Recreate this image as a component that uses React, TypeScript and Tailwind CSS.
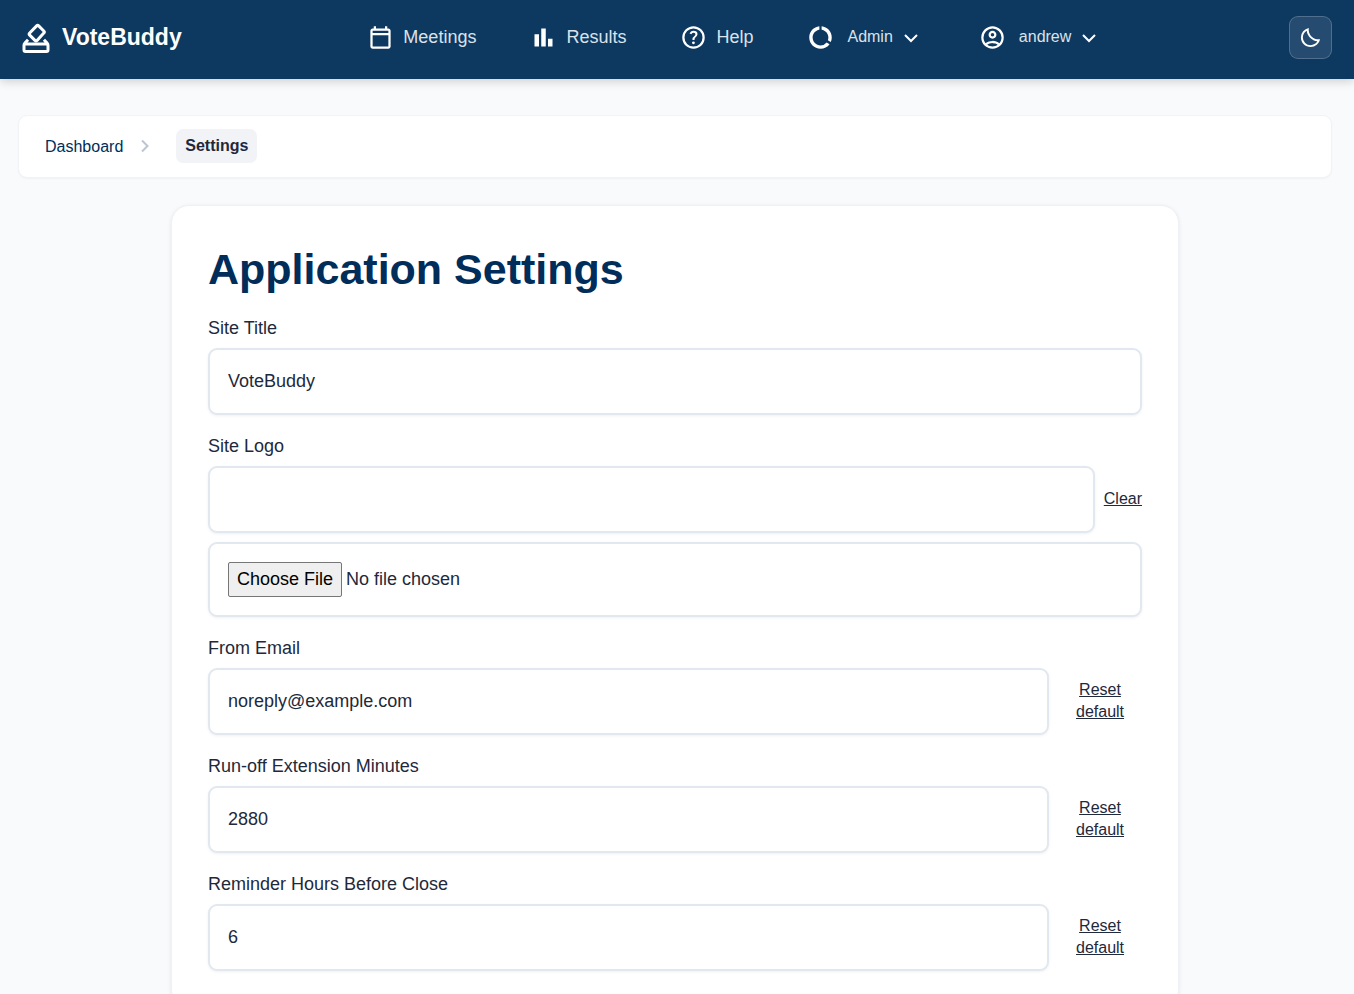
import React from "react";
import { MdBarChart, MdDataUsage } from "react-icons/md";

const navText = "text-[#dbe2ea]";

function BallotIcon() {
  return (
    <svg viewBox="0 0 24 24" className="size-9" fill="none" stroke="currentColor" strokeWidth="2" strokeLinejoin="round" aria-hidden="true">
      <path d="M6.700 13.100L4.600 15.400Q4 16 4 16.800V20a1 1 0 0 0 1 1h14a1 1 0 0 0 1-1v-3.200Q20 16 19.400 15.400L17.300 13.100M4.200 16h15.600" />
      <path d="M11.300 13.600L7.800 10.100Q7.100 9.400 7.800 8.700L12.400 3.900Q13.100 3.200 13.800 3.900L17.200 7.300Q17.900 8 17.200 8.700L12.700 13.600Q12 14.300 11.300 13.600z" />
    </svg>
  );
}

function CalendarIcon() {
  return (
    <svg viewBox="0 0 24 24" className="size-[27px]" fill="currentColor" aria-hidden="true">
      <path d="M5 22q-.825 0-1.412-.587T3 20V6q0-.825.588-1.412T5 4h1V2h2v2h8V2h2v2h1q.825 0 1.413.588T21 6v14q0 .825-.587 1.413T19 22zm0-2h14V10H5zM5 8h14V6H5z" />
    </svg>
  );
}

function HelpIcon() {
  return (
    <svg viewBox="0 0 24 24" className="size-[27px]" fill="currentColor" aria-hidden="true">
      <path d="M11.95 18q.525 0 .888-.363t.362-.887t-.362-.888t-.888-.362t-.887.363t-.363.887t.363.888t.887.362m-.9-3.85h1.85q0-.825.188-1.3t1.062-1.3q.65-.65 1.025-1.238T15.55 8.9q0-1.4-1.025-2.15T12.1 6q-1.425 0-2.312.75T8.55 8.55l1.65.65q.125-.45.563-.975T12.1 7.7q.8 0 1.2.438t.4.962q0 .5-.3.938t-.75.812q-1.1.975-1.35 1.475t-.25 1.825M12 22q-2.075 0-3.9-.788t-3.175-2.137T2.788 15.9T2 12t.788-3.9t2.137-3.175T8.1 2.788T12 2t3.9.788t3.175 2.137T21.213 8.1T22 12t-.788 3.9t-2.137 3.175t-3.175 2.138T12 22m0-2q3.350 0 5.675-2.325T20 12t-2.325-5.675T12 4T6.325 6.325T4 12t2.325 5.675T12 20" />
    </svg>
  );
}

function UserIcon() {
  return (
    <svg viewBox="0 0 24 24" className="size-[27px]" fill="currentColor" aria-hidden="true">
      <path d="M5.85 17.1q1.275-.975 2.85-1.537T12 15t3.3.563t2.85 1.537q.875-1.025 1.363-2.325T20 12q0-3.325-2.337-5.663T12 4T6.337 6.338T4 12q0 1.475.488 2.775T5.85 17.1M12 13q-1.475 0-2.488-1.012T8.5 9.5t1.013-2.488T12 6t2.488 1.013T15.5 9.5t-1.012 2.488T12 13m0 9q-2.075 0-3.9-.788t-3.175-2.137T2.788 15.9T2 12t.788-3.9t2.137-3.175T8.1 2.788T12 2t3.9.788t3.175 2.137T21.213 8.1T22 12t-.788 3.9t-2.137 3.175t-3.175 2.138T12 22m0-2q1.325 0 2.5-.387t2.15-1.113q-.975-.725-2.15-1.112T12 17t-2.5.388T7.35 18.5q.975.725 2.15 1.113T12 20m0-9q.65 0 1.075-.425T13.5 9.5t-.425-1.075T12 8t-1.075.425T10.5 9.5t.425 1.075T12 11" />
    </svg>
  );
}

function MoonIcon() {
  return (
    <svg viewBox="0 0 24 24" className="size-[23px]" fill="currentColor" aria-hidden="true">
      <path d="M12.1 22q-2.1 0-3.937-.8t-3.200-2.162t-2.163-3.200T2 11.900q0-3.650 2.325-6.437T10.250 2q-.450 2.475.275 4.838t2.500 4.137t4.138 2.500T22 13.750q-.650 3.600-3.450 5.925T12.100 22m0-2q2.200 0 4.075-1.100t2.950-3.025q-2.150-.200-4.075-1.088t-3.450-2.412t-2.425-3.450T8.100 4.850q-1.925 1.075-3.012 2.963T4 11.900q0 3.375 2.363 5.738T12.100 20" />
    </svg>
  );
}

function ChevronIcon() {
  return (
    <svg viewBox="0 0 14 10" className="h-[10px] w-[14px]" fill="none" stroke="currentColor" strokeWidth="2" aria-hidden="true">
      <path d="M1 2l6 6 6-6" />
    </svg>
  );
}

const inputClass =
  "block w-full min-w-0 rounded-[9px] border-2 border-[#e2e8f0] bg-white p-[18px] text-[18px] leading-[27px] text-[#1e293b] shadow-[0_1px_3px_rgba(0,0,0,0.06)]";
const linkClass = "pb-[2px] text-[16px] leading-[22px] text-[#1e293b] underline";

function ResettableField({ id, label, value, type = "text" }: { id: string; label: string; value: string; type?: string }) {
  return (
    <div>
      <label htmlFor={id} className="mb-[6px] block">{label}</label>
      <div className="flex items-center gap-[9px]">
        <input id={id} type={type} defaultValue={value} className={inputClass} />
        <button type="button" className={`w-[84px] shrink-0 px-[18px] text-center ${linkClass}`}>Reset default</button>
      </div>
    </div>
  );
}

export default function App() {
  return (
    <div className="min-h-screen bg-[#f9fafc] font-['Liberation_Sans',Arial,sans-serif] text-[18px] leading-[27px] text-[#1e293b]">
      <header className="flex items-center justify-between bg-[#0d3860] pt-4 pr-[22px] pb-5 pl-[18px] text-white shadow-[0_3px_9px_rgba(0,0,0,0.16)]">
        <a href="#" className="flex items-center gap-2 text-[23px] font-bold">
          <BallotIcon />
          VoteBuddy
        </a>
        <nav className="flex items-center gap-[54px]" aria-label="Main">
          <a href="#" className="flex items-center gap-[9px]">
            <CalendarIcon />
            <span className={navText}>Meetings</span>
          </a>
          <a href="#" className="flex items-center gap-[9px]">
            <MdBarChart className="size-[27px]" />
            <span className={navText}>Results</span>
          </a>
          <a href="#" className="flex items-center gap-[9px]">
            <HelpIcon />
            <span className={navText}>Help</span>
          </a>
          <button type="button" className="flex items-center pr-[7px] text-[16px]">
            <MdDataUsage className="size-[27px]" />
            <span className={`mr-[11px] ml-[13px] pb-[2px] ${navText}`}>Admin</span>
            <ChevronIcon />
          </button>
          <button type="button" className="flex items-center pr-[7px] text-[16px]">
            <UserIcon />
            <span className={`mr-[11px] ml-[13px] pb-[2px] ${navText}`}>andrew</span>
            <ChevronIcon />
          </button>
        </nav>
        <button
          type="button"
          aria-label="Toggle dark mode"
          className="flex size-[43px] items-center justify-center rounded-[9px] border border-white/20 bg-white/10"
        >
          <MoonIcon />
        </button>
      </header>

      <main className="pt-9 pr-[22px] pb-9 pl-[18px]">
        <nav
          aria-label="Breadcrumb"
          className="flex items-center rounded-[9px] border border-[#f1f3f7] bg-white px-[26px] pt-[13px] pb-[14px] text-[16px] shadow-[0_1px_2px_rgba(0,0,0,0.04)]"
        >
          <a href="#" className="text-[#002d59]">Dashboard</a>
          <svg viewBox="0 0 8 14" className="mr-[27px] ml-[18px] h-[14px] w-2" fill="none" stroke="#bcc5d2" strokeWidth="2" aria-hidden="true">
            <path d="M1 1.500l5.500 5.500-5.500 5.500" />
          </svg>
          <span className="rounded-[7px] bg-[#f1f3f7] px-[9px] py-1 font-bold leading-[26px]" aria-current="page">Settings</span>
        </nav>

        <section className="mx-auto mt-[27px] max-w-[1008px] rounded-[18px] border border-[#eef1f5] bg-white p-9 shadow-[0_1px_4px_rgba(0,0,0,0.08)]">
          <h1 className="mb-[19px] text-[43px] leading-[54px] font-bold text-[#002d59]">Application Settings</h1>
          <form className="flex flex-col gap-[18px]">
            <div>
              <label htmlFor="site-title" className="mb-[6px] block">Site Title</label>
              <input id="site-title" type="text" defaultValue="VoteBuddy" className={inputClass} />
            </div>
            <div>
              <label htmlFor="site-logo" className="mb-[6px] block">Site Logo</label>
              <div className="flex items-center gap-[9px]">
                <input id="site-logo" type="text" className={inputClass} />
                <button type="button" className={linkClass}>Clear</button>
              </div>
              <input
                type="file"
                aria-label="Upload site logo"
                className={`mt-[9px] ${inputClass} file:mr-1 file:rounded-[2px] file:border file:border-solid file:border-[#767676] file:bg-[#efefef] file:px-2 file:py-[3px] file:text-black`}
              />
            </div>
            <ResettableField id="from-email" label="From Email" value="noreply@example.com" type="email" />
            <ResettableField id="runoff-minutes" label="Run-off Extension Minutes" value="2880" />
            <ResettableField id="reminder-hours" label="Reminder Hours Before Close" value="6" />
          </form>
        </section>
      </main>
    </div>
  );
}
